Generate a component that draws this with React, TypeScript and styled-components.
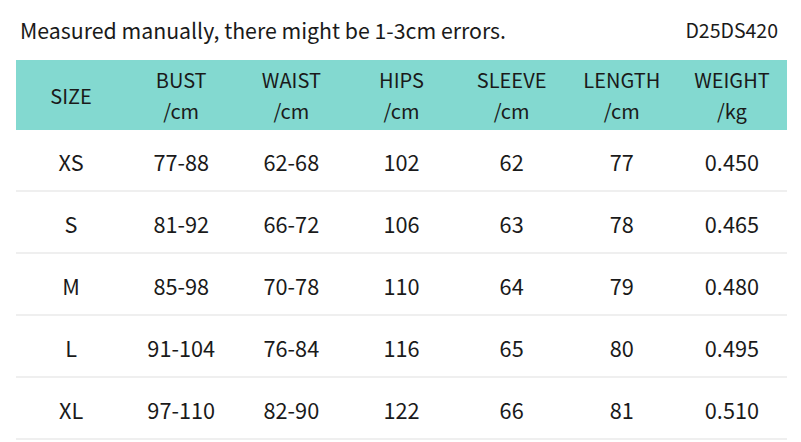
import styled, { createGlobalStyle } from "styled-components";

const GlobalStyle = createGlobalStyle`
  html, body {
    margin: 0;
    padding: 0;
    background: #ffffff;
  }
  body {
    font-family: "Noto Sans CJK SC", "Noto Sans", sans-serif;
    color: #1a1a1a;
  }
`;

const Page = styled.div`
  width: 801px;
  height: 442px;
  padding: 0 14px 0 16px;
  box-sizing: border-box;
  overflow: hidden;
`;

const Caption = styled.div`
  display: flex;
  justify-content: space-between;
  align-items: center;
  height: 60px;
  padding: 0 9px 0 4px;
  font-size: 21.3px;
  line-height: 1;
`;

const Code = styled.span`
  font-size: 19.5px;
`;

const Table = styled.div`
  display: grid;
  grid-template-columns: repeat(7, 1fr);
  width: 771px;
`;

const HeadCell = styled.div`
  background: #83d9d0;
  height: 70px;
  display: flex;
  flex-direction: column;
  align-items: center;
  justify-content: center;
  font-size: 20px;
  line-height: 31px;
  box-sizing: border-box;
`;

const Cell = styled.div`
  height: 62px;
  display: flex;
  align-items: center;
  justify-content: center;
  font-size: 21.7px;
  border-bottom: 2px solid #efefef;
  box-sizing: border-box;
  padding-top: 2px;
`;

const headers: [string, string?][] = [
  ["SIZE"],
  ["BUST", "/cm"],
  ["WAIST", "/cm"],
  ["HIPS", "/cm"],
  ["SLEEVE", "/cm"],
  ["LENGTH", "/cm"],
  ["WEIGHT", "/kg"],
];

const rows = [
  ["XS", "77-88", "62-68", "102", "62", "77", "0.450"],
  ["S", "81-92", "66-72", "106", "63", "78", "0.465"],
  ["M", "85-98", "70-78", "110", "64", "79", "0.480"],
  ["L", "91-104", "76-84", "116", "65", "80", "0.495"],
  ["XL", "97-110", "82-90", "122", "66", "81", "0.510"],
];

export default function App() {
  return (
    <>
      <GlobalStyle />
      <Page>
        <Caption>
          <span>Measured manually, there might be 1-3cm errors.</span>
          <Code>D25DS420</Code>
        </Caption>
        <Table>
          {headers.map(([name, unit]) => (
            <HeadCell key={name}>
              <span>{name}</span>
              {unit && <span>{unit}</span>}
            </HeadCell>
          ))}
          {rows.map((row) =>
            row.map((v, i) => <Cell key={row[0] + i}>{v}</Cell>)
          )}
        </Table>
      </Page>
    </>
  );
}
